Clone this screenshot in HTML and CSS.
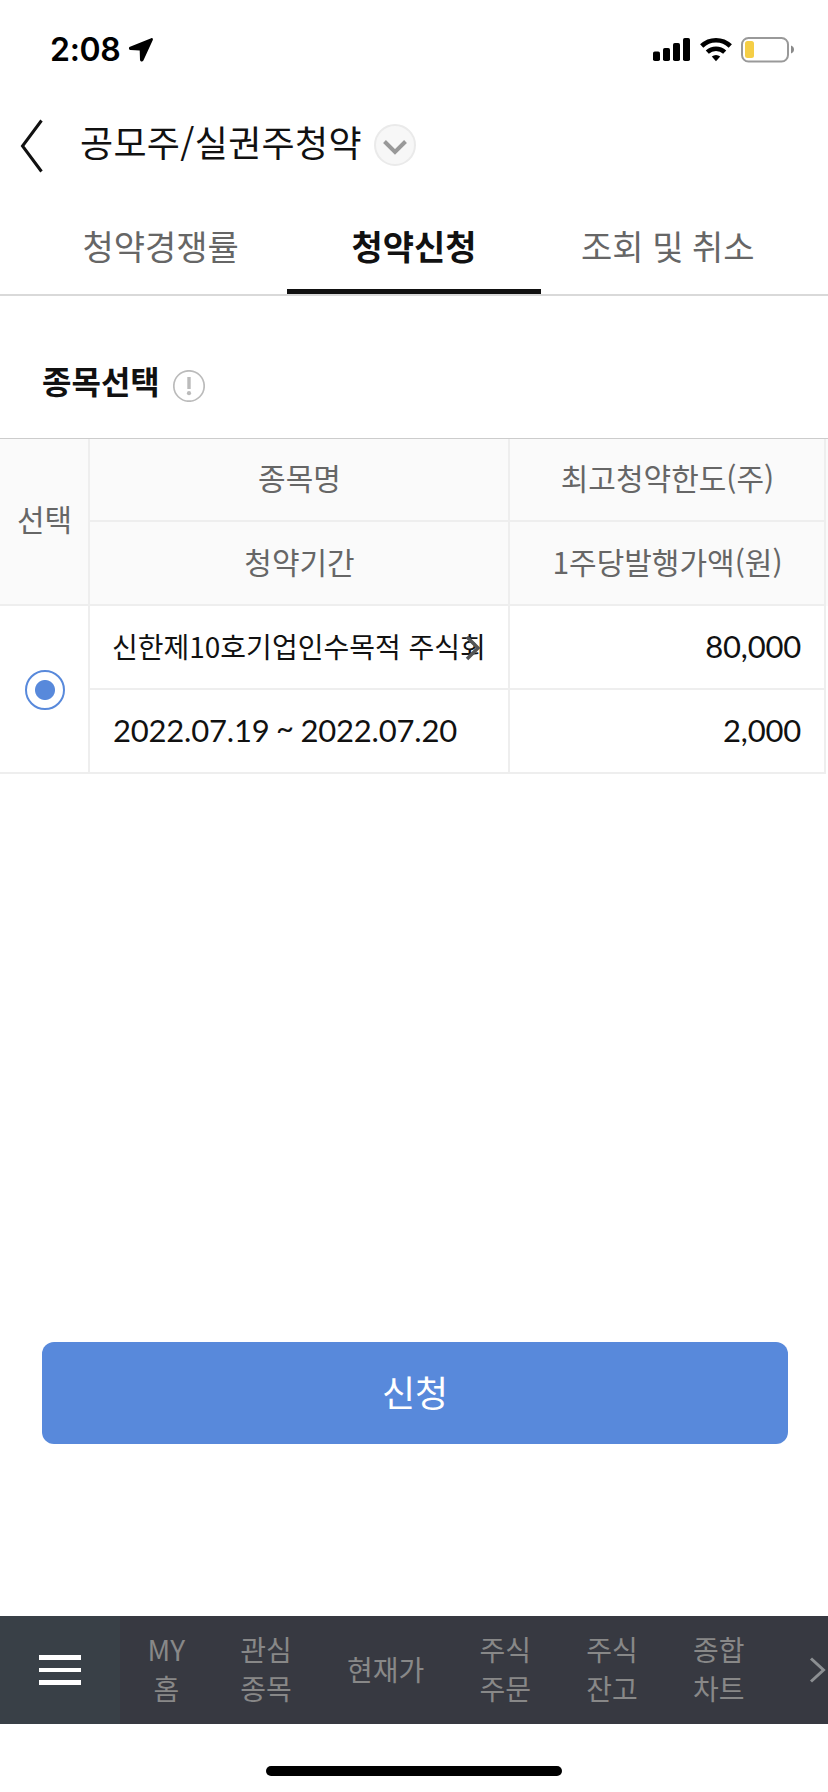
FILE: index.html
```html
<!DOCTYPE html>
<html lang="ko">
<head>
<meta charset="utf-8">
<meta name="viewport" content="width=device-width">
<title>공모주/실권주청약</title>
<link rel="stylesheet" href="styles.css">
</head>
<body>
<div class="screen">
  <div class="status">
    <span class="time">2:08</span>
    <svg class="location" width="26" height="26" viewBox="0 0 26 26"><path d="M23.2 1.2 2 9.7c-1.700.8-1.200 3.200.6 3.300l9.100.4.300 9.400c.1 2 2.600 2.400 3.400.6L24.800 3c.5-1.200-.4-2.300-1.600-1.800Z"/></svg>
    <svg class="signal" width="37" height="25" viewBox="0 0 37 25"><rect y="14.500" width="7" height="9.500" rx="1.800"/><rect x="10" y="11" width="7" height="13" rx="1.800"/><rect x="20" y="6" width="7" height="18" rx="1.800"/><rect x="30" y="1" width="7" height="23" rx="1.800"/></svg>
    <svg class="wifi" width="32" height="25" viewBox="0 0 32 25"><g fill="none" stroke="#000"><path d="M1.700 9a20.500 20.500 0 0 1 28.600 0" stroke-width="4.600"/><path d="M7.300 15.100a12.700 12.700 0 0 1 17.400 0" stroke-width="4.500"/></g><path d="M16 24.300 11.800 19.600a6.200 6.200 0 0 1 8.400 0Z"/></svg>
    <svg class="battery" width="54" height="26" viewBox="0 0 54 26"><rect x="1" y="1" width="46" height="23.500" rx="6.500" fill="none" stroke="#999" stroke-width="2"/><rect x="4" y="4" width="9" height="17" rx="2.500" fill="#f5ce46"/><path d="M50 8.500q3 1.200 3 4t-3 4Z" fill="#8a8a8a"/></svg>
  </div>

  <header class="header">
    <svg class="back" width="24" height="56" viewBox="0 0 24 56"><path d="M21.500 2.500 2.500 28l19 25.500" fill="none" stroke="#111" stroke-width="3"/></svg>
    <h1 class="title">공모주/실권주청약</h1>
    <svg class="drop" width="42" height="42" viewBox="0 0 42 42"><circle cx="21" cy="21" r="20" fill="#f7f7f7" stroke="#eaeaea" stroke-width="2"/><path d="m10.500 17.500 10.500 10.500 10.500-10.500" fill="none" stroke="#999" stroke-width="4"/></svg>
  </header>

  <nav class="tabs">
    <span class="tab">청약경쟁률</span>
    <span class="tab active">청약신청</span>
    <span class="tab">조회 및 취소</span>
  </nav>

  <div class="section">
    <h2 class="section-title">종목선택</h2>
    <svg class="info" width="32" height="32" viewBox="0 0 32 32"><circle cx="16" cy="16" r="15.200" fill="none" stroke="#bbb" stroke-width="1.700"/><path d="M16 7v12" stroke="#bbb" stroke-width="3.400"/><circle cx="16" cy="23.200" r="2.100" fill="#bbb"/></svg>
  </div>

  <div class="table">
    <div class="cell head pick">선택</div>
    <div class="cell head">종목명</div>
    <div class="cell head">최고청약한도(주)</div>
    <div class="edge"></div>
    <div class="cell head">청약기간</div>
    <div class="cell head">1주당발행가액(원)</div>
    <div class="cell pick"><span class="radio"></span></div>
    <div class="cell name">신한제10호기업인수목적 주식회<svg class="more" width="16" height="26" viewBox="0 0 16 26"><path d="m2 2 11 11L2 24" fill="none" stroke="#555" stroke-width="3.500"/></svg></div>
    <div class="cell num">80,000</div>
    <div class="blank"></div>
    <div class="cell date"><span>2022.07.19</span><span class="tilde">~</span><span>2022.07.20</span></div>
    <div class="cell num">2,000</div>
  </div>

  <button class="apply">신청</button>

  <nav class="dock">
    <span class="menu"><i></i><i></i><i></i></span>
    <span class="item">MY<br>홈</span>
    <span class="item">관심<br>종목</span>
    <span class="item">현재가</span>
    <span class="item">주식<br>주문</span>
    <span class="item">주식<br>잔고</span>
    <span class="item">종합<br>차트</span>
    <svg class="next" width="18" height="28" viewBox="0 0 18 28"><path d="m2 2.500 12.500 11.500L2 25.500" fill="none" stroke="#8c8f92" stroke-width="3"/></svg>
  </nav>
  <div class="home"></div>
</div>
</body>
</html>
```
FILE: styles.css
```css
* { box-sizing: border-box; }
body { margin: 0; background: #fff; }
svg { display: block; flex: none; }
.screen {
  width: 828px; height: 1792px; overflow: hidden;
  display: flex; flex-direction: column;
  background: #fff; color: #111;
  font-family: "Noto Sans CJK KR", "Noto Sans", sans-serif;
}
.status { height: 100px; flex: none; display: flex; align-items: flex-start; padding: 37px 33px 0 50px; }
.time { width: 78px; font: 600 32px/26px Inter, sans-serif; color: #000; letter-spacing: -0.3px; }
.signal { margin-left: 499px; }
.wifi { margin-left: 10px; }
.battery { margin-left: 9px; }

.header { height: 96px; flex: none; display: flex; align-items: flex-start; padding: 18px 20px 0; }
.title { margin: -3px 0 0 36px; width: 294px; font-size: 36px; line-height: 52px; font-weight: 400; letter-spacing: 0.3px; white-space: nowrap; }
.drop { margin-top: 6px; }

.tabs { height: 100px; flex: none; display: flex; padding: 0 34px; border-bottom: 2px solid #d9d9d9; }
.tab {
  width: 253.330px; padding-top: 25px; text-align: center;
  font-size: 34px; line-height: 50px; color: #666; white-space: nowrap; word-spacing: -1px;
}
.tab:last-child { padding-left: 1px; }
.active { font-weight: 700; color: #111; border-bottom: 5.500px solid #111; }

.section { height: 142px; flex: none; display: flex; align-items: flex-start; padding: 60px 42px 0; }
.section-title { margin: 0; width: 131px; font-size: 32px; line-height: 48px; font-weight: 700; }
.info { margin-top: 14px; }

.table {
  flex: none; display: grid;
  grid-template-columns: 90px 420px 316px 2px;
  grid-template-rows: 83px 84px 84px 84px;
  border-top: 1px solid #ccc;
}
.cell {
  border-right: 2px solid #eee; border-bottom: 2px solid #eee;
  display: flex; align-items: center; white-space: nowrap;
}
.head { justify-content: center; padding: 0 0 5px 1px; background: #fafafa; color: #666; font-size: 30px; }
.pick { grid-row: span 2; justify-content: center; }
.pick.head { padding-bottom: 7px; }
.radio {
  width: 40px; height: 40px; margin: 2px 0 0 2px; border: 2px solid #5889db; border-radius: 50%;
  background: radial-gradient(circle, #5889db 9.500px, #fff 10.500px);
}
.name { padding: 0 0 3px 22px; font-size: 28px; position: relative; }
.more { position: absolute; left: 375px; top: 29px; }
.date, .num { font-family: Lato, sans-serif; font-size: 31px; letter-spacing: -0.2px; padding: 0 0 2px 23px; }
.tilde { width: 31px; text-align: center; padding-bottom: 6px; }
.num { justify-content: flex-end; padding-right: 23px; }
.edge { grid-row: span 2; background: #fafafa; }
.blank { grid-row: span 2; }

.apply {
  flex: none; width: 746px; height: 102px; margin: 568px 0 0 42px; padding: 0 0 5px;
  border: 0; border-radius: 12px; background: #5889db; color: #fff;
  font-family: inherit; font-size: 36px;
}

.dock { flex: none; height: 108px; margin-top: 172px; display: flex; align-items: center; background: #373941; }
.menu {
  width: 120px; height: 108px; margin-right: 27.500px; flex: none; background: #394047;
  display: flex; flex-direction: column; align-items: center; justify-content: center; gap: 8px;
}
.menu i { width: 42px; height: 4.500px; background: #fff; }
.item { margin-right: 55.200px; padding-bottom: 2px; text-align: center; font-size: 28px; line-height: 39px; color: #888; white-space: nowrap; }
.next { margin-left: 9px; }
.home { flex: none; width: 296px; height: 10px; margin: 42px 0 0 266px; border-radius: 5px; background: #000; }
```
